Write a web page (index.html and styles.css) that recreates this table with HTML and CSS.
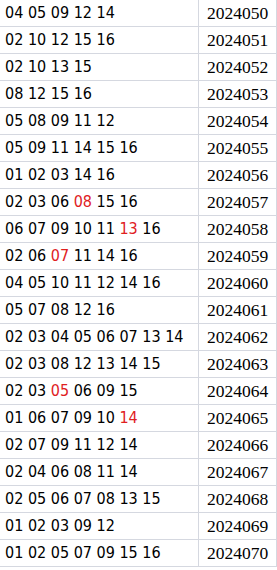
FILE: index.html
```html
<!DOCTYPE html>
<html>
<head>
<meta charset="utf-8">
<link rel="stylesheet" href="styles.css">
</head>
<body>
<div class="sheet">
  <div class="row"><div class="nums">04 05 09 12 14</div><div class="period">2024050</div></div>
  <div class="row"><div class="nums">02 10 12 15 16</div><div class="period">2024051</div></div>
  <div class="row"><div class="nums">02 10 13 15</div><div class="period">2024052</div></div>
  <div class="row"><div class="nums">08 12 15 16</div><div class="period">2024053</div></div>
  <div class="row"><div class="nums">05 08 09 11 12</div><div class="period">2024054</div></div>
  <div class="row"><div class="nums">05 09 11 14 15 16</div><div class="period">2024055</div></div>
  <div class="row"><div class="nums">01 02 03 14 16</div><div class="period">2024056</div></div>
  <div class="row"><div class="nums">02 03 06 <span class="hit">08</span> 15 16</div><div class="period">2024057</div></div>
  <div class="row"><div class="nums">06 07 09 10 11 <span class="hit">13</span> 16</div><div class="period">2024058</div></div>
  <div class="row"><div class="nums">02 06 <span class="hit">07</span> 11 14 16</div><div class="period">2024059</div></div>
  <div class="row"><div class="nums">04 05 10 11 12 14 16</div><div class="period">2024060</div></div>
  <div class="row"><div class="nums">05 07 08 12 16</div><div class="period">2024061</div></div>
  <div class="row"><div class="nums">02 03 04 05 06 07 13 14</div><div class="period">2024062</div></div>
  <div class="row"><div class="nums">02 03 08 12 13 14 15</div><div class="period">2024063</div></div>
  <div class="row"><div class="nums">02 03 <span class="hit">05</span> 06 09 15</div><div class="period">2024064</div></div>
  <div class="row"><div class="nums">01 06 07 09 10 <span class="hit">14</span></div><div class="period">2024065</div></div>
  <div class="row"><div class="nums">02 07 09 11 12 14</div><div class="period">2024066</div></div>
  <div class="row"><div class="nums">02 04 06 08 11 14</div><div class="period">2024067</div></div>
  <div class="row"><div class="nums">02 05 06 07 08 13 15</div><div class="period">2024068</div></div>
  <div class="row"><div class="nums">01 02 03 09 12</div><div class="period">2024069</div></div>
  <div class="row"><div class="nums">01 02 05 07 09 15 16</div><div class="period">2024070</div></div>
</div>
</body>
</html>
```
FILE: styles.css
```css
html, body {
  margin: 0;
  padding: 0;
  background: #ffffff;
}
.sheet {
  display: flex;
  flex-direction: column;
  width: 277px;
}
.row {
  display: grid;
  grid-template-columns: 199px 78px;
  height: 27px;
}
.nums, .period {
  border-right: 1px solid #d5d8e0;
  border-bottom: 1px solid #d5d8e0;
  height: 26px;
  line-height: 26px;
  color: #000;
  white-space: nowrap;
  overflow: hidden;
}
.nums {
  font-family: "DejaVu Sans Condensed", "DejaVu Sans", sans-serif;
  font-stretch: condensed;
  font-size: 16px;
  padding-left: 5px;
}
.period {
  font-family: "Liberation Serif", serif;
  font-size: 17.5px;
  padding-left: 8px;
}
.hit {
  color: #e0201e;
}
```
